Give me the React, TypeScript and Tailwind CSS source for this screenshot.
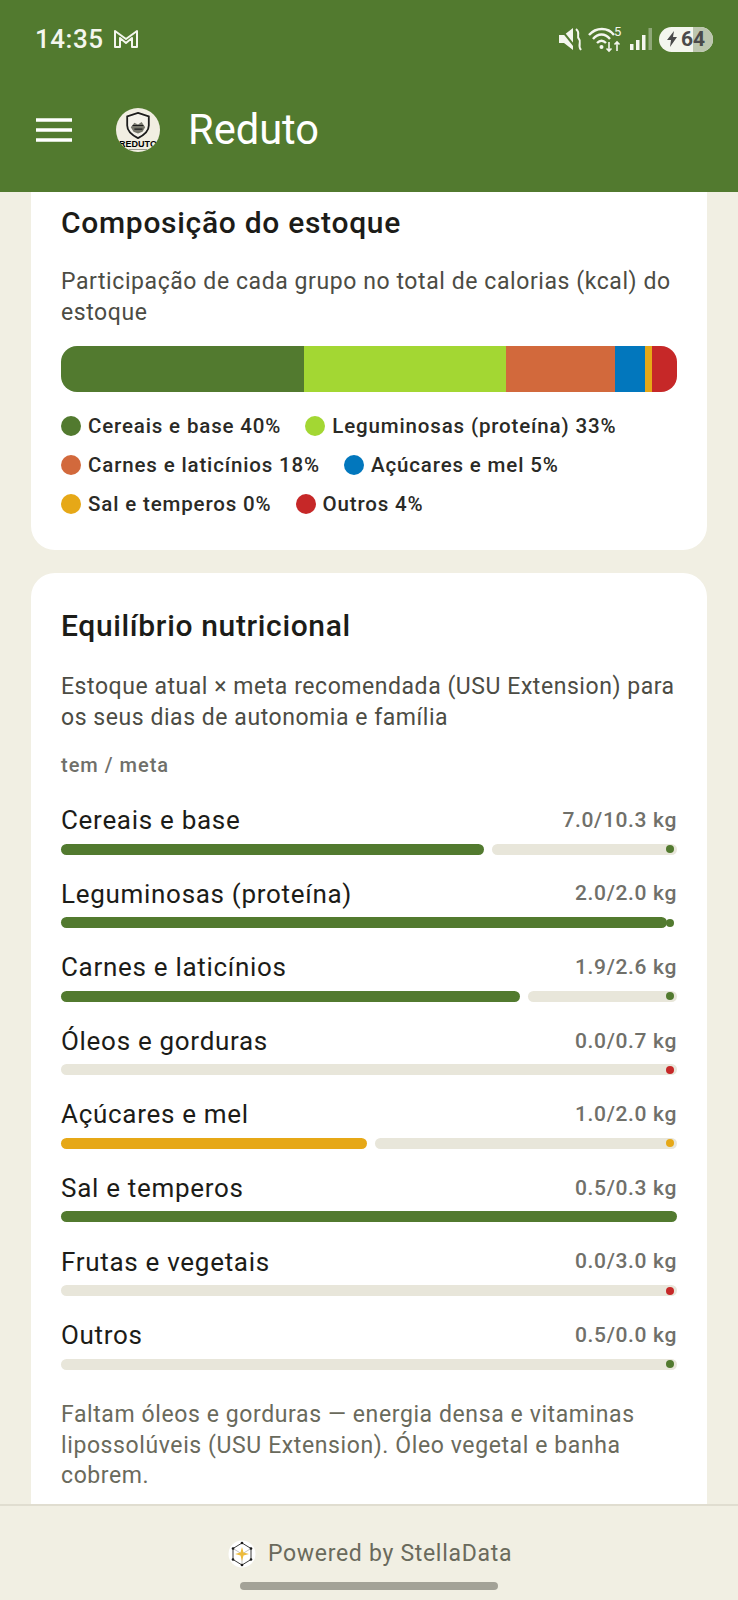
const legend = [
  [["#527a2f", "Cereais e base 40%"], ["#a3d733", "Leguminosas (proteína) 33%"]],
  [["#d2693c", "Carnes e laticínios 18%"], ["#0277bd", "Açúcares e mel 5%"]],
  [["#e6a817", "Sal e temperos 0%"], ["#c62828", "Outros 4%"]],
];

const segments: [string, string][] = [
  ["w-[243px]", "bg-[#527a2f]"],
  ["w-[202px]", "bg-[#a3d733]"],
  ["w-[109px]", "bg-[#d2693c]"],
  ["w-[30px]", "bg-[#0277bd]"],
  ["w-[7px]", "bg-[#e6a817]"],
  ["w-[25px]", "bg-[#c62828]"],
];

const rows = [
  { label: "Cereais e base", value: "7.0/10.3 kg", fill: 423, color: "#527a2f", dot: "#527a2f" },
  { label: "Leguminosas (proteína)", value: "2.0/2.0 kg", fill: 606, color: "#527a2f", dot: "#527a2f" },
  { label: "Carnes e laticínios", value: "1.9/2.6 kg", fill: 459, color: "#527a2f", dot: "#527a2f" },
  { label: "Óleos e gorduras", value: "0.0/0.7 kg", fill: 0, color: "#527a2f", dot: "#c62828" },
  { label: "Açúcares e mel", value: "1.0/2.0 kg", fill: 306, color: "#e6a817", dot: "#e6a817" },
  { label: "Sal e temperos", value: "0.5/0.3 kg", fill: 616, color: "#527a2f", dot: "" },
  { label: "Frutas e vegetais", value: "0.0/3.0 kg", fill: 0, color: "#527a2f", dot: "#c62828" },
  { label: "Outros", value: "0.5/0.0 kg", fill: 0, color: "#527a2f", dot: "#527a2f" },
];

function Bar({ fill, color, dot }: { fill: number; color: string; dot: string }) {
  const hasTrack = fill < 600;
  return (
    <div className="relative flex h-[11px] w-[616px] gap-2">
      {fill > 0 && <div className="h-full shrink-0 rounded-full" style={{ width: fill, background: color }} />}
      {hasTrack && <div className="h-full flex-1 rounded-full bg-[#e8e6da]" />}
      {dot && (
        <div className="absolute right-[3px] top-[1.5px] h-2 w-2 rounded-full" style={{ background: dot }} />
      )}
    </div>
  );
}

function Logo() {
  return (
    <div className="relative flex h-[44px] w-[44px] flex-col items-center overflow-hidden rounded-full bg-[#f1eee2]">
      <svg width="26" height="27" viewBox="0 0 28 30" className="mt-[4px]">
        <path d="M14 1 L26 5 V15 C26 22 20 26 14 29 C8 26 2 22 2 15 V5 Z" fill="#f4f2ea" stroke="#1c1c1c" strokeWidth="2" />
        <path d="M6 17 L10 12 L14 14 L18 11 L22 17 L19 22 L14 24 L9 22 Z" fill="#77776c" />
        <path d="M8 15 H20 M10 19 H19" stroke="#1c1c1c" strokeWidth="1.2" />
      </svg>
      <div className="absolute top-[32px] font-['Liberation_Sans',sans-serif] text-[9px] font-bold leading-[9px] text-black">REDUTO</div>
      <div className="absolute top-[41px] h-px w-[18px] bg-[#9a9a90]" />
    </div>
  );
}

function StatusIcons() {
  return (
    <div className="flex items-center">
      <svg width="24" height="24" viewBox="0 0 24 24" className="mr-[5px]">
        <path d="M0 8 H5 L14 1 V23 L5 16 H0 Z" fill="#f4f6ee" />
        <path d="M0 0 L17 21" stroke="#527a2f" strokeWidth="2" />
        <path d="M17 2 C22 6 17 9 20 12 C23 15 18 18 22 23" stroke="#f4f6ee" strokeWidth="2" fill="none" />
      </svg>
      <svg width="36" height="28" viewBox="0 0 36 28">
        <path d="M1 10 C8 2 20 2 26 10" stroke="#f4f6ee" strokeWidth="2.4" fill="none" />
        <path d="M5 14 C10 8 17 8 22 14" stroke="#f4f6ee" strokeWidth="2.4" fill="none" />
        <path d="M9 18 C12 15 15 15 18 18" stroke="#f4f6ee" strokeWidth="2.4" fill="none" />
        <circle cx="13.5" cy="22" r="2" fill="#f4f6ee" />
        <path d="M21 17 V26 M18.500 23.500 L21 26 L23.500 23.500 M29 26 V17 M26.500 19.500 L29 17 L31.500 19.500" stroke="#f4f6ee" strokeWidth="1.600" fill="none" />
        <text x="26" y="11" fontSize="13" fill="#f4f6ee" fontFamily="Roboto, sans-serif">5</text>
      </svg>
      <svg width="22" height="24" viewBox="0 0 22 24" className="ml-[6px]">
        <rect x="0" y="17" width="3.5" height="6" fill="#f4f6ee" />
        <rect x="6" y="13" width="3.5" height="10" fill="#f4f6ee" />
        <rect x="12" y="8" width="3.500" height="15" fill="#f4f6ee" />
        <rect x="18.500" y="1" width="3.500" height="22" fill="#8fa878" />
      </svg>
      <div className="relative ml-[7px] flex h-[25px] w-[54px] items-center overflow-hidden rounded-full bg-[#f4f6ee] font-['Roboto',sans-serif] text-[21px] font-bold leading-none text-[#4a4a4a]">
        <div className="absolute inset-y-0 right-0 w-[20px] bg-[#bcc6ae]" />
        <svg width="14" height="18" viewBox="0 0 14 18" className="relative ml-[6px]">
          <path d="M9 1 L2 10 H6 L5 17 L12 7 H8 Z" fill="#4a4a4a" />
        </svg>
        <span className="relative ml-[2px]">64</span>
      </div>
    </div>
  );
}

export default function App() {
  return (
    <div className="flex h-[1600px] w-[738px] flex-col overflow-hidden bg-[#f1efe3] font-['Roboto',sans-serif]">
      <header className="h-[192px] shrink-0 bg-[#527a2f] text-white">
        <div className="flex h-[78px] items-center justify-between pl-[35px] pr-[25px]">
          <div className="flex items-center">
            <span className="text-[26px] font-medium tracking-[0.5px] text-[#f4f6ee]">14:35</span>
            <svg width="26" height="20" viewBox="0 0 26 20" className="ml-[10px]">
              <path d="M2 18 V2 L13 10 L24 2 V18 H19 V9 L13 14 L7 9 V18 Z" fill="none" stroke="#f4f6ee" strokeWidth="2" strokeLinejoin="round" />
            </svg>
          </div>
          <StatusIcons />
        </div>
        <div className="flex h-[104px] items-center pl-[36px]">
          <svg width="36" height="24" viewBox="0 0 36 24">
            <path d="M0 2 H36 M0 12 H36 M0 22 H36" stroke="#fff" strokeWidth="3.500" />
          </svg>
          <div className="ml-[44px]">
            <Logo />
          </div>
          <span className="ml-[28px] text-[41.6px] font-normal leading-none">Reduto</span>
        </div>
      </header>

      <main className="min-h-0 flex-1 overflow-hidden px-[31px]">
        <section className="h-[358px] rounded-b-[24px] bg-white pl-[30px] pr-[28px] pt-[13px]">
          <h2 className="text-[30px] font-medium leading-[36px] tracking-[0.7px] text-[#1c1c18]">Composição do estoque</h2>
          <p className="mt-[25px] text-[23px] leading-[31px] tracking-[0.58px] text-[#4c4c44]">
            Participação de cada grupo no total de calorias (kcal) do estoque
          </p>
          <div className="mt-[18px] flex h-[46px] w-[616px] overflow-hidden rounded-[16px]">
            {segments.map(([w, c]) => (
              <div key={c} className={`${w} h-full ${c}`} />
            ))}
          </div>
          <div className="mt-[20px] flex flex-col gap-[11px]">
            {legend.map((line, i) => (
              <div key={i} className="flex h-[28px] items-center gap-[24px]">
                {line.map(([color, text]) => (
                  <div key={text} className="flex items-center gap-[7px]">
                    <span className="h-[20px] w-[20px] rounded-full" style={{ background: color }} />
                    <span className="text-[20.5px] font-medium tracking-[0.85px] text-[#2a2a26]">{text}</span>
                  </div>
                ))}
              </div>
            ))}
          </div>
        </section>

        <section className="mt-[23px] rounded-[24px] bg-white pb-[40px] pl-[30px] pr-[28px] pt-[35px]">
          <h2 className="text-[30px] font-medium leading-[36px] tracking-[0.65px] text-[#1c1c18]">Equilíbrio nutricional</h2>
          <p className="mt-[27px] text-[23px] leading-[31px] tracking-[0.55px] text-[#4c4c44]">
            Estoque atual × meta recomendada (USU Extension) para os seus dias de autonomia e família
          </p>
          <p className="mt-[19px] text-[20px] font-medium leading-[26px] tracking-[1px] text-[#70706a]">tem / meta</p>
          <div className="mt-[24.5px] flex flex-col gap-[21.6px]">
            {rows.map((r) => (
              <div key={r.label}>
                <div className="flex h-[36px] w-[616px] items-center justify-between">
                  <span className="text-[26px] tracking-[0.7px] text-[#1c1c18]">{r.label}</span>
                  <span className="text-[21px] font-medium tracking-[0.65px] text-[#70706a]">{r.value}</span>
                </div>
                <div className="mt-[5px]">
                  <Bar fill={r.fill} color={r.color} dot={r.dot} />
                </div>
              </div>
            ))}
          </div>
          <p className="mt-[30.5px] text-[23px] leading-[30.6px] tracking-[0.6px] text-[#6a6a5c]">
            Faltam óleos e gorduras — energia densa e vitaminas lipossolúveis (USU Extension). Óleo vegetal e banha cobrem.
          </p>
        </section>
      </main>

      <footer className="relative h-[96px] shrink-0 border-t-2 border-[#e0ddd0] bg-[#f1efe3]">
        <div className="flex h-[96px] items-center justify-center gap-[12px] pl-[2px]">
          <svg width="28" height="32" viewBox="0 0 28 32">
            <circle cx="14" cy="16" r="13.500" fill="#fff" />
            <path d="M14 5 L23 10.500 V21.500 L14 27 L5 21.500 V10.500 Z" fill="none" stroke="#3c3c3c" strokeWidth="1" />
            <path d="M5 10.500 L14 16 L23 10.500 M14 16 V27" fill="none" stroke="#9a9a9a" strokeWidth="0.6" />
            <path d="M14 9 L15.500 14.500 L21 16 L15.500 17.500 L14 23 L12.500 17.500 L7 16 L12.500 14.500 Z" fill="#edbb3c" />
            <g fill="#1c1c1c">
              <circle cx="14" cy="5" r="1.300" /><circle cx="23" cy="10.500" r="1.300" /><circle cx="23" cy="21.500" r="1.300" />
              <circle cx="14" cy="27" r="1.300" /><circle cx="5" cy="21.500" r="1.300" /><circle cx="5" cy="10.500" r="1.300" />
            </g>
          </svg>
          <span className="text-[23px] tracking-[0.7px] text-[#6a6a5c]">Powered by StellaData</span>
        </div>
        <div className="absolute bottom-[10px] left-[240px] h-2 w-[258px] rounded-full bg-[#a3a297]" />
      </footer>
    </div>
  );
}
